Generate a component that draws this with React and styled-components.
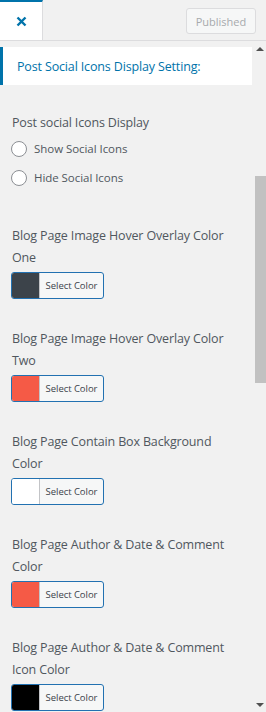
import React from "react";
import styled, { createGlobalStyle } from "styled-components";

const Global = createGlobalStyle`
  html, body { margin: 0; padding: 0; }
  body {
    background: #f1f1f1;
    overflow: hidden;
    font-family: "Open Sans", "Noto Sans", sans-serif;
  }
`;

const Page = styled.div`
  width: 266px;
  height: 712px;
  display: flex;
  flex-direction: column;
  overflow: hidden;
`;

const Header = styled.div`
  height: 40px;
  flex: none;
  display: flex;
  justify-content: space-between;
  align-items: flex-start;
  border-bottom: 1px solid #dcdcde;
`;

const CloseButton = styled.div`
  width: 42px;
  height: 38px;
  background: #fff;
  border-top: 2px solid #0073aa;
  border-right: 1px solid #dcdcde;
  display: flex;
  align-items: center;
  justify-content: center;
`;

const PublishButton = styled.div`
  margin: 8px 10px 0 0;
  width: 68px;
  height: 24px;
  border: 1px solid #dcdcde;
  border-radius: 3px;
  background: #f6f7f7;
  color: #a7aaad;
  font-size: 11px;
  display: flex;
  align-items: center;
  justify-content: center;
`;

const Body = styled.div`
  flex: 1;
  display: flex;
  min-height: 0;
`;

const Content = styled.div`
  flex: 1;
  min-width: 0;
  padding-top: 6px;
`;

const SectionTitle = styled.div`
  width: 235px;
  height: 38px;
  background: #fff;
  border-left: 3px solid #0073aa;
  padding-left: 14px;
  display: flex;
  align-items: center;
  color: #0073aa;
  font-size: 12.5px;
  letter-spacing: -0.15px;
  white-space: nowrap;
`;

const Controls = styled.div`
  padding: 0 12px;
`;

const Label = styled.div`
  color: #50575e;
  font-size: 12.5px;
  letter-spacing: -0.15px;
  line-height: 22px;
  white-space: nowrap;
  margin-top: ${(p) => p.$top}px;
`;

const Line = styled.div``;

const RadioRow = styled.div`
  display: flex;
  align-items: center;
  height: 29px;
  margin-left: -1px;
  gap: 7px;
  color: #50575e;
  font-size: 11.5px;
  letter-spacing: -0.05px;
  white-space: nowrap;
`;

const RadioCircle = styled.span`
  width: 14px;
  height: 14px;
  border: 1px solid #8c8f94;
  border-radius: 50%;
  background: #fff;
  flex: none;
`;

const ColorButton = styled.div`
  margin-top: 3px;
  margin-left: -1px;
  width: 91px;
  height: 25px;
  border: 1px solid #2271b1;
  border-radius: 3px;
  display: flex;
  overflow: hidden;
  background: #f6f7f7;
`;

const Swatch = styled.span`
  width: 27px;
  flex: none;
  background: ${(p) => p.$color};
  border-right: 1px solid #c3c4c7;
`;

const SwatchText = styled.span`
  flex: 1;
  display: flex;
  align-items: center;
  justify-content: center;
  color: #3c434a;
  font-size: 9.5px;
  letter-spacing: -0.05px;
  white-space: nowrap;
`;

const Scroll = styled.div`
  width: 12px;
  flex: none;
  display: flex;
  flex-direction: column;
  align-items: center;
`;

const Arrow = styled.div`
  width: 0;
  height: 0;
  border-left: 4px solid transparent;
  border-right: 4px solid transparent;
  ${(p) =>
    p.$down
      ? "border-top: 4px solid #505050; margin-top: auto; margin-bottom: 5px;"
      : "border-bottom: 4px solid #505050; margin-top: 6px;"}
`;

const Thumb = styled.div`
  width: 11px;
  align-self: flex-end;
  height: 207px;
  margin-top: 125px;
  background: #c1c1c1;
`;

const colorGroups = [
  { lines: ["Blog Page Image Hover Overlay Color", "One"], color: "#3c434a" },
  { lines: ["Blog Page Image Hover Overlay Color", "Two"], color: "#f55a46" },
  { lines: ["Blog Page Contain Box Background", "Color"], color: "#ffffff" },
  { lines: ["Blog Page Author & Date & Comment", "Color"], color: "#f55a46" },
  { lines: ["Blog Page Author & Date & Comment", "Icon Color"], color: "#000000" },
];

export default function App() {
  return (
    <Page>
      <Global />
      <Header>
        <CloseButton>
          <svg width="11" height="11" viewBox="0 0 11 11">
            <path d="M1.5 1.5 L9.5 9.5 M9.5 1.5 L1.5 9.5" stroke="#0073aa" strokeWidth="2.4" />
          </svg>
        </CloseButton>
        <PublishButton>Published</PublishButton>
      </Header>
      <Body>
        <Content>
          <SectionTitle>Post Social Icons Display Setting:</SectionTitle>
          <Controls>
            <Label $top={27}>Post social Icons Display</Label>
            <RadioRow>
              <RadioCircle />
              Show Social Icons
            </RadioRow>
            <RadioRow>
              <RadioCircle />
              Hide Social Icons
            </RadioRow>
            {colorGroups.map((g, i) => (
              <div key={i}>
                <Label $top={i === 0 ? 33 : 29}>
                  {g.lines.map((l) => (
                    <Line key={l}>{l}</Line>
                  ))}
                </Label>
                <ColorButton>
                  <Swatch $color={g.color} />
                  <SwatchText>Select Color</SwatchText>
                </ColorButton>
              </div>
            ))}
          </Controls>
        </Content>
        <Scroll>
          <Arrow />
          <Thumb />
          <Arrow $down />
        </Scroll>
      </Body>
    </Page>
  );
}
